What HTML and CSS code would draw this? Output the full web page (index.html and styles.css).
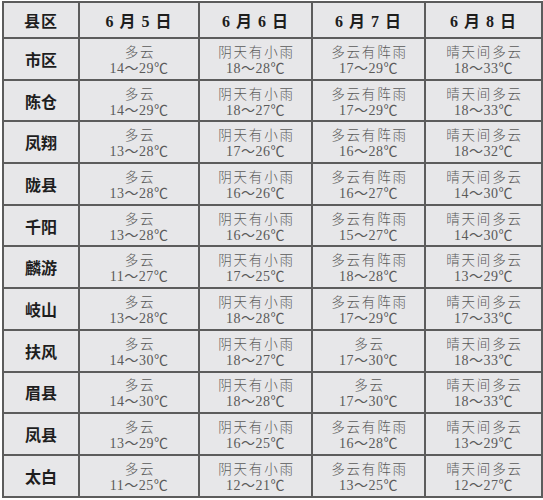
FILE: index.html
```html
<!DOCTYPE html>
<html lang="zh">
<head>
<meta charset="utf-8">
<link rel="stylesheet" href="styles.css">
</head>
<body>
<table class="wx">
  <colgroup>
    <col class="c0"><col class="c1"><col class="c2"><col class="c3"><col class="c4">
  </colgroup>
  <thead>
    <tr class="head">
      <th class="name">县区</th>
      <th>6 月 5 日</th>
      <th>6 月 6 日</th>
      <th>6 月 7 日</th>
      <th>6 月 8 日</th>
    </tr>
  </thead>
  <tbody>
    <tr><th class="name">市区</th>
      <td><span class="w">多云</span><span class="t">14～29℃</span></td>
      <td><span class="w">阴天有小雨</span><span class="t">18～28℃</span></td>
      <td><span class="w">多云有阵雨</span><span class="t">17～29℃</span></td>
      <td><span class="w">晴天间多云</span><span class="t">18～33℃</span></td></tr>
    <tr><th class="name">陈仓</th>
      <td><span class="w">多云</span><span class="t">14～29℃</span></td>
      <td><span class="w">阴天有小雨</span><span class="t">18～27℃</span></td>
      <td><span class="w">多云有阵雨</span><span class="t">17～29℃</span></td>
      <td><span class="w">晴天间多云</span><span class="t">18～33℃</span></td></tr>
    <tr><th class="name">凤翔</th>
      <td><span class="w">多云</span><span class="t">13～28℃</span></td>
      <td><span class="w">阴天有小雨</span><span class="t">17～26℃</span></td>
      <td><span class="w">多云有阵雨</span><span class="t">16～28℃</span></td>
      <td><span class="w">晴天间多云</span><span class="t">18～32℃</span></td></tr>
    <tr><th class="name">陇县</th>
      <td><span class="w">多云</span><span class="t">13～28℃</span></td>
      <td><span class="w">阴天有小雨</span><span class="t">16～26℃</span></td>
      <td><span class="w">多云有阵雨</span><span class="t">16～27℃</span></td>
      <td><span class="w">晴天间多云</span><span class="t">14～30℃</span></td></tr>
    <tr><th class="name">千阳</th>
      <td><span class="w">多云</span><span class="t">13～28℃</span></td>
      <td><span class="w">阴天有小雨</span><span class="t">16～26℃</span></td>
      <td><span class="w">多云有阵雨</span><span class="t">15～27℃</span></td>
      <td><span class="w">晴天间多云</span><span class="t">14～30℃</span></td></tr>
    <tr><th class="name">麟游</th>
      <td><span class="w">多云</span><span class="t">11～27℃</span></td>
      <td><span class="w">阴天有小雨</span><span class="t">17～25℃</span></td>
      <td><span class="w">多云有阵雨</span><span class="t">18～28℃</span></td>
      <td><span class="w">晴天间多云</span><span class="t">13～29℃</span></td></tr>
    <tr><th class="name">岐山</th>
      <td><span class="w">多云</span><span class="t">13～28℃</span></td>
      <td><span class="w">阴天有小雨</span><span class="t">18～28℃</span></td>
      <td><span class="w">多云有阵雨</span><span class="t">17～29℃</span></td>
      <td><span class="w">晴天间多云</span><span class="t">17～33℃</span></td></tr>
    <tr><th class="name">扶风</th>
      <td><span class="w">多云</span><span class="t">14～30℃</span></td>
      <td><span class="w">阴天有小雨</span><span class="t">18～27℃</span></td>
      <td><span class="w">多云</span><span class="t">17～30℃</span></td>
      <td><span class="w">晴天间多云</span><span class="t">18～33℃</span></td></tr>
    <tr><th class="name">眉县</th>
      <td><span class="w">多云</span><span class="t">14～30℃</span></td>
      <td><span class="w">阴天有小雨</span><span class="t">18～28℃</span></td>
      <td><span class="w">多云</span><span class="t">17～30℃</span></td>
      <td><span class="w">晴天间多云</span><span class="t">18～33℃</span></td></tr>
    <tr><th class="name">凤县</th>
      <td><span class="w">多云</span><span class="t">13～29℃</span></td>
      <td><span class="w">阴天有小雨</span><span class="t">16～25℃</span></td>
      <td><span class="w">多云有阵雨</span><span class="t">16～28℃</span></td>
      <td><span class="w">晴天间多云</span><span class="t">13～29℃</span></td></tr>
    <tr><th class="name">太白</th>
      <td><span class="w">多云</span><span class="t">11～25℃</span></td>
      <td><span class="w">阴天有小雨</span><span class="t">12～21℃</span></td>
      <td><span class="w">多云有阵雨</span><span class="t">13～25℃</span></td>
      <td><span class="w">晴天间多云</span><span class="t">12～27℃</span></td></tr>
  </tbody>
</table>
</body>
</html>
```

FILE: styles.css
```css
html, body {
  margin: 0;
  padding: 0;
  background: #ffffff;
}
body {
  padding: 1px 2px 0 2px;
  font-family: "Liberation Serif", "Noto Sans CJK SC", serif;
}
.wx {
  border-collapse: collapse;
  table-layout: fixed;
  width: 540px;
  background: #e7e7e9;
}
.c0 { width: 76px; }
.c1 { width: 120px; }
.c2 { width: 113px; }
.c3 { width: 113px; }
.c4 { width: 117px; }
.wx th, .wx td {
  border: 2px solid #5c5c5c;
  padding: 0;
  text-align: center;
  vertical-align: middle;
}
.wx td {
  padding-top: 2px;
}
.head th {
  height: 34px;
  font-size: 16px;
  font-weight: bold;
  color: #1e1e1e;
  letter-spacing: 1px;
}
tbody tr {
  height: 41.7px;
}
.name {
  font-family: "Noto Sans CJK SC", sans-serif;
  font-size: 16px;
  font-weight: bold;
  color: #1e1e1e;
  letter-spacing: 0;
}
.w, .t {
  display: block;
  color: #5a5a5a;
  line-height: 18px;
}
.w {
  font-family: "Noto Sans CJK SC", sans-serif;
  font-size: 13.5px;
  letter-spacing: 1.8px;
  margin-right: -2px;
  font-weight: 300;
}
.t {
  font-family: "Liberation Serif", "Noto Sans CJK SC", serif;
  font-size: 14px;
  letter-spacing: 0.5px;
}
```
